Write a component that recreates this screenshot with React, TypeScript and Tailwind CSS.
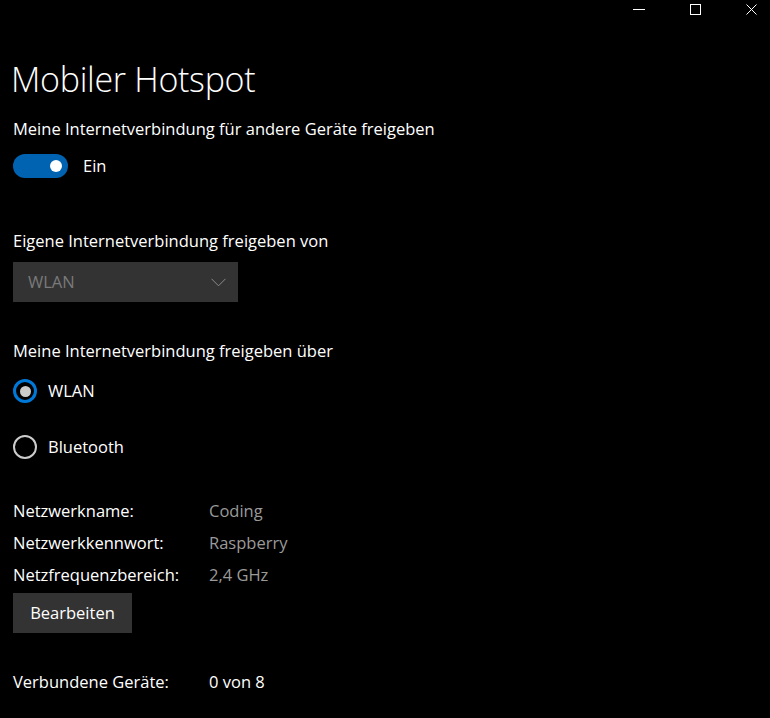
import React from "react";

const font = { fontFamily: '"Open Sans", "Noto Sans", sans-serif' };

function Toggle() {
  return (
    <div className="flex items-center gap-[15px]">
      <div className="relative h-[24px] w-[55px] rounded-full bg-[#0063b1]">
        <div className="absolute right-[6px] top-[6px] h-[12px] w-[12px] rounded-full bg-white" />
      </div>
      <span className="text-[16.5px] leading-[22px] text-white">Ein</span>
    </div>
  );
}

function Radio({ label, checked }: { label: string; checked?: boolean }) {
  return (
    <div className="flex h-[24px] items-center gap-[11px]">
      {checked ? (
        <div className="flex h-[24px] w-[24px] items-center justify-center rounded-full border-[3px] border-[#0078d7]">
          <div className="h-[11px] w-[11px] rounded-full bg-[#cccccc]" />
        </div>
      ) : (
        <div className="h-[24px] w-[24px] rounded-full border-2 border-[#cccccc]" />
      )}
      <span className="text-[16.5px] leading-[22px] text-white">{label}</span>
    </div>
  );
}

function InfoRow({ label, value, bright }: { label: string; value: string; bright?: boolean }) {
  return (
    <div className="flex h-[32px] items-center text-[16.5px] leading-[22px]">
      <span className="w-[196px] text-white">{label}</span>
      <span className={bright ? "text-white" : "text-[#9a9a9a]"}>{value}</span>
    </div>
  );
}

export default function App() {
  return (
    <div className="h-[718px] w-[770px] overflow-hidden bg-black text-white" style={font}>
      {/* Titelleiste */}
      <div className="flex h-[30px] items-start justify-end gap-[45px] pr-[13px] pt-[4px]">
        <div className="flex h-[11px] w-[12px] items-center">
          <div className="h-px w-[12px] bg-white" />
        </div>
        <div className="h-[11px] w-[11px] border border-white" />
        <svg width="11" height="11" viewBox="0 0 11 11">
          <path d="M0.5 0.5 L10.5 10.5 M10.5 0.5 L0.5 10.5" stroke="white" strokeWidth="1" />
        </svg>
      </div>

      <div className="px-[13px]">
        <h1 className="ml-[-2px] mt-[32px] h-[34px] text-[34px] font-light leading-[34px] tracking-[-0.3px]">
          Mobiler Hotspot
        </h1>

        <p className="mt-[22px] text-[16.5px] leading-[22px]">Meine Internetverbindung für andere Geräte freigeben</p>
        <div className="mt-[14px]">
          <Toggle />
        </div>

        <p className="mt-[52px] text-[16.5px] leading-[22px]">Eigene Internetverbindung freigeben von</p>
        <div className="mt-[10px] flex h-[40px] w-[225px] items-center justify-between bg-[#333333] pl-[15px] pr-[12px]">
          <span className="text-[16.5px] leading-[22px] text-[#7a7a7a]">WLAN</span>
          <svg width="15" height="9" viewBox="0 0 15 9">
            <path d="M0.5 0.8 L7.5 7.8 L14.5 0.8" stroke="#8a8a8a" strokeWidth="1" fill="none" />
          </svg>
        </div>

        <p className="mt-[38px] text-[16.5px] leading-[22px]">Meine Internetverbindung freigeben über</p>
        <div className="mt-[17px] flex flex-col gap-[32px]">
          <Radio label="WLAN" checked />
          <Radio label="Bluetooth" />
        </div>

        <div className="mt-[36px]">
          <InfoRow label="Netzwerkname:" value="Coding" />
          <InfoRow label="Netzwerkkennwort:" value="Raspberry" />
          <InfoRow label="Netzfrequenzbereich:" value="2,4 GHz" />
        </div>
        <button className="mt-[2px] h-[40px] w-[119px] bg-[#333333] text-[16.5px] leading-[22px] text-white">
          Bearbeiten
        </button>

        <div className="mt-[33px]">
          <InfoRow label="Verbundene Geräte:" value="0 von 8" bright />
        </div>
      </div>
    </div>
  );
}
